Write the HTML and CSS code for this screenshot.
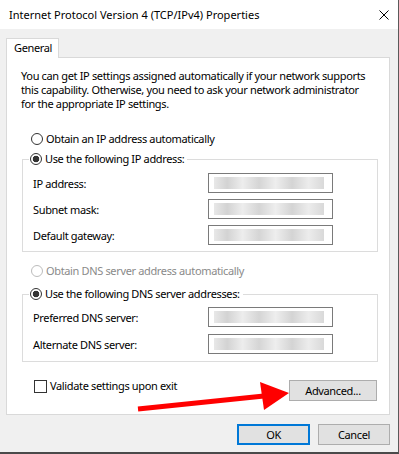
FILE: index.html
```html
<!DOCTYPE html>
<html lang="en">
<head>
    <meta charset="UTF-8">
    <meta name="viewport" content="width=device-width, initial-scale=1.0">
    <title>Internet Protocol Version 4 (TCP/IPv4) Properties</title>
    <link rel="stylesheet" href="styles.css">
</head>
<body>

    <div class="dialog">
        <div class="titlebar">
            <span class="title">Internet Protocol Version 4 (TCP/IPv4) Properties</span>
            <svg class="close" width="10" height="10" viewBox="0 0 10 10">
                <path d="M0.5 0.5 L9.5 9.5 M9.5 0.5 L0.5 9.5" stroke="#000" stroke-width="1"/>
            </svg>
        </div>

        <div class="dialog-body">
            <div class="tabs">
                <div class="tab">General</div>
            </div>

            <div class="panel">
                <p class="intro">You can get IP settings assigned automatically if your network supports<br>this capability. Otherwise, you need to ask your network administrator<br>for the appropriate IP settings.</p>

                <label class="option first"><input type="radio" name="ip">Obtain an IP address automatically</label>

                <fieldset class="group">
                    <legend><label class="option"><input type="radio" name="ip" checked>Use the following IP address:</label></legend>
                    <div class="fields">
                        <label for="ip-address">IP address:</label>
                        <input type="text" id="ip-address" class="field">
                        <label for="subnet">Subnet mask:</label>
                        <input type="text" id="subnet" class="field">
                        <label for="gateway">Default gateway:</label>
                        <input type="text" id="gateway" class="field">
                    </div>
                </fieldset>

                <label class="option dns disabled"><input type="radio" name="dns" disabled>Obtain DNS server address automatically</label>

                <fieldset class="group dns-group">
                    <legend><label class="option"><input type="radio" name="dns" checked>Use the following DNS server addresses:</label></legend>
                    <div class="fields dns-fields">
                        <label for="dns1">Preferred DNS server:</label>
                        <input type="text" id="dns1" class="field">
                        <label for="dns2">Alternate DNS server:</label>
                        <input type="text" id="dns2" class="field">
                    </div>
                </fieldset>

                <div class="validate-row">
                    <label class="check"><input type="checkbox">Validate settings upon exit</label>
                    <button type="button" class="btn advanced">Advanced...</button>
                </div>
            </div>

            <div class="footer">
                <button type="button" class="btn default">OK</button>
                <button type="button" class="btn">Cancel</button>
            </div>
        </div>

        <!-- red annotation arrow drawn over the dialog -->
        <svg class="annotation" width="399" height="454" viewBox="0 0 399 454">
            <line x1="138" y1="409" x2="264" y2="396" stroke="#ff0000" stroke-width="5"/>
            <polygon points="260,382 289,393 264,410" fill="#ff0000"/>
        </svg>
    </div>

</body>
</html>
```

FILE: styles.css
```css
body {
    margin: 0;
    padding: 0;
    background: #f0f0f0;
    font-family: 'Noto Sans', 'DejaVu Sans', sans-serif;
    font-size: 11px;
    color: #000;
}

.dialog {
    position: relative;
    width: 399px;
    height: 454px;
    box-sizing: border-box;
    background: #f0f0f0;
    border-right: 1px solid #5a5a5a;
    border-bottom: 2px solid #4a4a4a;
}

.titlebar {
    height: 29px;
    background: #fff;
    display: flex;
    align-items: center;
    justify-content: space-between;
    padding: 0 9px 0 9px;
}

.title {
    line-height: 29px;
}

.dialog-body {
    padding-top: 9px;
    letter-spacing: -0.35px; /* narrower, closer to the system font */
}

.tabs {
    display: flex;
    padding-left: 6px;
}

.tab {
    position: relative;
    width: 53px;
    height: 20px;
    box-sizing: border-box;
    margin-bottom: -1px;
    padding: 1px 0 0 7px;
    line-height: 16px;
    background: #fff;
    border: 1px solid #d9d9d9;
    border-bottom: none;
}

.panel {
    margin-left: 6px;
    width: 384px;
    height: 358px;
    box-sizing: border-box;
    background: #fff;
    border: 1px solid #d9d9d9;
    padding: 11px 11px 0 14px;
}

.intro {
    margin: 0;
    line-height: 14px;
    white-space: nowrap;
}

.option {
    display: flex;
    align-items: center;
    height: 14px;
    line-height: 14px;
    white-space: nowrap;
}

.option input {
    appearance: none;
    -webkit-appearance: none;
    width: 12px;
    height: 12px;
    margin: 0 3px 0 0;
    box-sizing: border-box;
    border: 1px solid #333;
    border-radius: 50%;
    background: #fff;
}

.option input:checked {
    background: radial-gradient(circle, #333 0 3px, #fff 3.6px);
}

.option.first {
    margin: 21px 0 0 10px;
}

.option.dns {
    margin: 12px 0 0 10px;
}

.option.disabled {
    color: #8a8a8a;
}

.option.disabled input {
    border-color: #bcbcbc;
}

.group {
    margin: 6px 0 0 1px;
    padding: 0;
    border: 1px solid #dcdcdc;
}

.dns-group {
    margin-top: 9px;
}

.group legend {
    margin-left: 6px;
    padding: 0 3px 0 1px;
}

.fields {
    display: grid;
    grid-template-columns: 175px 125px;
    row-gap: 6px;
    align-items: center;
    padding: 7px 0 6px 10px;
}

.dns-fields {
    row-gap: 7px;
    padding: 6px 0 7px 10px;
}

.field {
    width: 125px;
    height: 20px;
    box-sizing: border-box;
    margin: 0;
    padding: 0;
    border: 1px solid #7a7a7a;
    outline: none;
    /* blurred address, as in the screenshot */
    background: #fff linear-gradient(90deg, #e8e8e8, #d3d3d3 12%, #ededed 26%, #d5d5d5 41%, #eeeeee 56%, #d4d4d4 71%, #ececec 86%, #d9d9d9) no-repeat 5px 3px / 110px 12px;
}

.validate-row {
    display: flex;
    justify-content: space-between;
    align-items: flex-start;
    margin-top: 17px;
    padding-left: 13px;
}

.check {
    display: flex;
    align-items: center;
    height: 14px;
    line-height: 14px;
}

.check input {
    appearance: none;
    -webkit-appearance: none;
    width: 13px;
    height: 13px;
    margin: 0 3px 0 0;
    box-sizing: border-box;
    border: 1px solid #333;
    background: #fff;
}

.btn {
    height: 21px;
    box-sizing: border-box;
    padding: 0;
    font-family: inherit;
    font-size: 11px;
    letter-spacing: inherit;
    color: #000;
    background: #e1e1e1;
    border: 1px solid #adadad;
}

.btn.advanced {
    width: 88px;
    margin: 1px 1px 0 0;
}

.footer {
    display: flex;
    justify-content: flex-end;
    gap: 8px;
    margin-top: 9px;
    padding-right: 8px;
}

.footer .btn {
    width: 72px;
}

.btn.default {
    width: 73px;
    border: 2px solid #0078d7;
}

.annotation {
    position: absolute;
    top: 0;
    left: 0;
    pointer-events: none;
}
```
